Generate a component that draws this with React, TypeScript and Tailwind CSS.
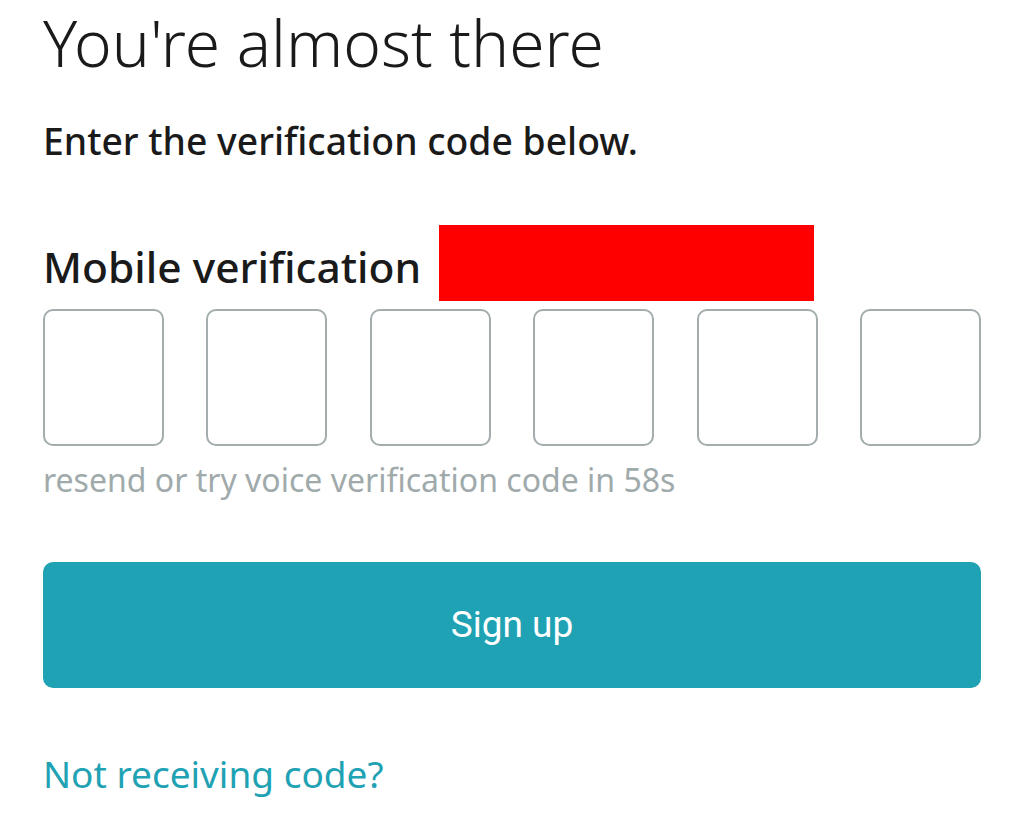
export default function App() {
  const boxes = [0, 1, 2, 3, 4, 5];

  return (
    <div className="min-h-screen bg-white px-[43px] pt-[3px] font-['Noto_Sans',sans-serif]">
      {/* Heading */}
      <h1 className="text-[64px] leading-[80px] font-light text-[#1a1a1a]">
        You're almost there
      </h1>
      <p className="mt-[33px] text-[37.3px] leading-[50px] font-medium text-[#1a1a1a]">
        Enter the verification code below.
      </p>

      {/* Mobile verification label + redacted number */}
      <div className="mt-[59px] flex items-start gap-[18px]">
        <span className="text-[42.5px] leading-[83px] font-medium text-[#1a1a1a]">
          Mobile verification
        </span>
        <div className="w-[375px] h-[76px] bg-[#ff0000]" />
      </div>

      {/* Code inputs */}
      <div className="mt-[1px] flex justify-between">
        {boxes.map(i => (
          <input
            key={i}
            type="text"
            maxLength={1}
            className="w-[121px] h-[137px] rounded-[10px] border-2 border-[#a3adae] bg-white outline-none"
          />
        ))}
      </div>

      <p className="mt-[14px] text-[32px] leading-[40px] text-[#a0aaab]">
        resend or try voice verification code in 58s
      </p>

      <button className="mt-[62px] w-full h-[126px] rounded-[10px] bg-[#1fa2b3] text-white text-[37px] font-['Roboto',sans-serif]">
        Sign up
      </button>

      <p className="mt-[61px] text-[37px] leading-[50px] text-[#1fa2b3]">
        Not receiving code?
      </p>
    </div>
  );
}
